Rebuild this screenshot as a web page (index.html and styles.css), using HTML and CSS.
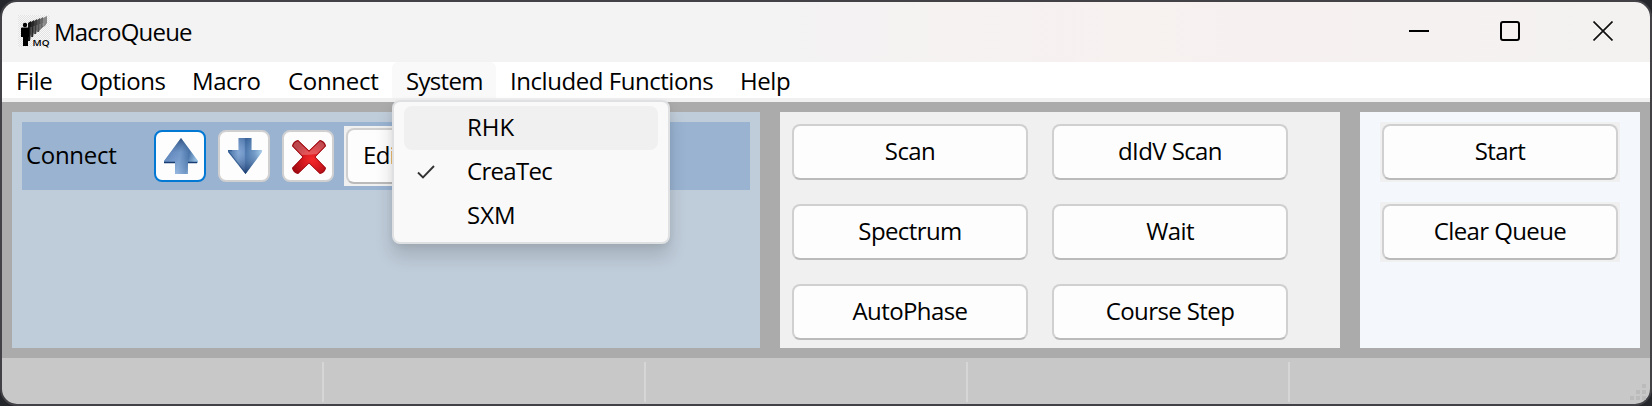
FILE: index.html
```html
<!DOCTYPE html>
<html lang="en">
<head>
<meta charset="utf-8">
<title>MacroQueue</title>
<link rel="stylesheet" href="styles.css">
</head>
<body>
<div class="window">
  <header class="titlebar">
    <svg class="app-icon" width="32" height="32" viewBox="0 0 32 32">
      <defs>
        <pattern id="checker" width="2" height="2" patternUnits="userSpaceOnUse">
          <rect width="2" height="2" fill="#f8f8f8"/><rect width="1" height="1" fill="#e2e2e2"/><rect x="1" y="1" width="1" height="1" fill="#e2e2e2"/>
        </pattern>
      </defs>
      <rect width="32" height="32" fill="url(#checker)"/>
      <path d="M25 3l4-2v7l-2 3-2 1z" fill="#888"/>
      <path d="M22 4l3-2v10l-3 3z" fill="#666"/>
      <path d="M19 5l3-2v11l-1 3h-2z" fill="#505050"/>
      <path d="M16 6l3-2v11l-1 4h-2z" fill="#3c3c3c"/>
      <path d="M13 7l3-2v12l-1 5h-2z" fill="#282828"/>
      <path d="M10 8l3-2v13l-1 7h-2z" fill="#161616"/>
      <g fill="#000"><circle cx="7" cy="10" r="2.200"/><path d="M4 12.500h6q1 0 1 1V22H10v9H5v-9H3v-8.500q0-1 1-1z"/></g>
      <path d="M13 12v11M16 11v9M19 10v7M22 9v5M25 8v3" stroke="#bbb" stroke-width=".5"/>
      <text class="icon-label" x="14.500" y="31" textLength="17" lengthAdjust="spacingAndGlyphs">MQ</text>
    </svg>
    <h1 class="title">MacroQueue</h1>
    <div class="controls">
      <svg width="20" height="20" viewBox="0 0 20 20"><path d="M0 10h20" stroke="#000" stroke-width="2"/></svg>
      <svg class="maximize" width="20" height="20" viewBox="0 0 20 20"><rect x="1" y="1" width="18" height="18" rx="2" fill="none" stroke="#000" stroke-width="2"/></svg>
      <svg width="20" height="20" viewBox="0 0 20 20"><path d="M.5.5l19 19M19.500.5l-19 19" stroke="#111" stroke-width="1.700"/></svg>
    </div>
  </header>

  <nav class="menubar">
    <div class="menu m-file">File</div>
    <div class="menu m-options">Options</div>
    <div class="menu m-macro">Macro</div>
    <div class="menu m-connect">Connect</div>
    <div class="menu m-system open">System
      <div class="dropdown">
        <div class="option hover"><span class="mark"></span><span class="caps">RHK</span></div>
        <div class="option"><span class="mark"><svg width="18" height="14" viewBox="0 0 18 14"><path d="M1 7.500l5 5L17 1" fill="none" stroke="#333" stroke-width="1.900"/></svg></span><span class="createc">CreaTec</span></div>
        <div class="option"><span class="mark"></span><span class="caps">SXM</span></div>
      </div>
    </div>
    <div class="menu m-functions">Included Functions</div>
    <div class="menu m-help">Help</div>
  </nav>

  <main class="workspace">
    <section class="queue">
      <div class="queue-row">
        <span class="queue-name">Connect</span>
        <button class="tool focused" aria-label="Move up">
          <svg width="34" height="36" viewBox="0 0 34 36">
            <defs><linearGradient id="up" x1="0" y1="0" x2="1" y2=".2"><stop offset="0" stop-color="#5d83b9"/><stop offset=".35" stop-color="#7c9fcf"/><stop offset=".55" stop-color="#88acd8"/><stop offset=".8" stop-color="#527cae"/><stop offset="1" stop-color="#a9d3ef"/></linearGradient>
            <linearGradient id="shade" x1="0" y1="0" x2="0" y2="1"><stop offset="0" stop-color="#173968" stop-opacity=".8"/><stop offset=".4" stop-color="#315d98" stop-opacity=".25"/><stop offset="1" stop-color="#a9c7ec" stop-opacity=".4"/></linearGradient></defs>
            <path d="M17 0L34 23v2H24v11H11V25H0v-2z" fill="url(#up)"/>
            <path d="M17 0L34 23v2H24v11H11V25H0v-2z" fill="url(#shade)"/>
            <path d="M0 24.500h11M24 24.500h9" stroke="#183d73" stroke-width="1.300"/>
          </svg>
        </button>
        <button class="tool" aria-label="Move down">
          <svg width="34" height="36" viewBox="0 0 34 36">
            <defs><linearGradient id="down" x1="0" y1="0" x2="1" y2="0"><stop offset="0" stop-color="#315d94"/><stop offset=".3" stop-color="#86a9d6"/><stop offset=".48" stop-color="#6f94c6"/><stop offset=".52" stop-color="#416da4"/><stop offset=".8" stop-color="#779fc8"/><stop offset="1" stop-color="#b6dcf2"/></linearGradient>
            <linearGradient id="tip" x1="0" y1="0" x2="0" y2="1"><stop offset="0" stop-color="#244d83" stop-opacity=".4"/><stop offset=".4" stop-color="#7fa6d4" stop-opacity=".2"/><stop offset="1" stop-color="#102f62" stop-opacity=".85"/></linearGradient></defs>
            <path d="M10.500 0h13v12H34v2L17.500 36 0 14v-2h10.500z" fill="url(#down)"/>
            <path d="M10.500 0h13v12H34v2L17.500 36 0 14v-2h10.500z" fill="url(#tip)"/>
            <path d="M0 12.700h4M1 14l16.500 21" fill="none" stroke="#1c4277" stroke-width="1" opacity=".6"/>
          </svg>
        </button>
        <button class="tool delete" aria-label="Delete">
          <svg width="34" height="34" viewBox="0 0 34 34">
            <defs><radialGradient id="red" cx=".6" cy=".58" r=".58"><stop offset="0" stop-color="#f52a2a"/><stop offset=".45" stop-color="#d91b20"/><stop offset="1" stop-color="#a50b12"/></radialGradient></defs>
            <path d="M6 0L17 10.500 28 0q5 1 6 6L23.500 17 34 28q-1 5-6 6L17 23.500 6 34q-5-1-6-6L10.500 17 0 6q1-5 6-6z" fill="url(#red)"/>
            <path d="M6 1l11 11L28 1q4 1 5 5l-8 8q-8 1-15 1L1 6q1-4 5-5z" fill="#fff" opacity=".25"/>
            <path d="M6 .5L17 11 28 .5q4.500 1 5.500 5.500L23 17l10.500 11q-1 4.500-5.500 5.500L17 23 6 33.500q-4.500-1-5.500-5.500L11 17 .5 6Q1.500 1.500 6 .5z" fill="none" stroke="#960d14" stroke-width=".8"/>
          </svg>
        </button>
        <div class="edit-cell"><button class="edit">Edit</button></div>
      </div>
    </section>

    <section class="functions">
      <button class="action">Scan</button>
      <button class="action">dIdV Scan</button>
      <button class="action">Spectrum</button>
      <button class="action">Wait</button>
      <button class="action">AutoPhase</button>
      <button class="action">Course Step</button>
    </section>

    <section class="run">
      <div class="cell"><button class="action">Start</button></div>
      <div class="cell"><button class="action">Clear Queue</button></div>
    </section>
  </main>

  <footer class="statusbar">
    <div class="field"></div>
    <div class="field"></div>
    <div class="field"></div>
    <div class="field"></div>
    <svg class="grip" width="16" height="16" viewBox="0 0 16 16" fill="#bbb"><path d="M12 0h4v4h-4zM6 6h4v4H6zM12 6h4v4h-4zM0 12h4v4H0zM6 12h4v4H6zM12 12h4v4h-4z"/></svg>
  </footer>
</div>
</body>
</html>
```
FILE: styles.css
```css
* { box-sizing: border-box; }

body {
  margin: 0;
  padding: 2px;
  width: 1652px;
  height: 406px;
  overflow: hidden;
  background: #25262c;
  font-family: "Open Sans", "Noto Sans", sans-serif;
  font-size: 24px;
  letter-spacing: -0.6px;
  color: #000;
}

.window {
  width: 1648px;
  height: 402px;
  border-radius: 15px;
  overflow: hidden;
  box-shadow: 0 0 0 2px #414146;
  display: flex;
  flex-direction: column;
}

.titlebar {
  height: 60px;
  flex: none;
  display: flex;
  align-items: center;
  padding: 0 37px 2px 16px;
  background: linear-gradient(90deg, #f3f3f3 0%, #f3f3f3 45%, #f7f1f0 68%, #f5f1f0 85%, #f3f2f1 100%);
}

.app-icon {
  flex: none;
  overflow: visible;
}

.icon-label {
  font: 600 9.5px "Open Sans", sans-serif;
  letter-spacing: 0;
}

.title {
  margin: 0 0 0 4px;
  font-size: 24px;
  font-weight: 400;
  line-height: 30px;
  padding-top: 2px;
  letter-spacing: -0.8px;
}

.controls {
  margin-left: auto;
  padding-bottom: 1px;
  display: flex;
  gap: 72px;
}

.controls svg { display: block; }

.controls .maximize { margin: 0 1px 0 -1px; }

.menubar {
  height: 40px;
  flex: none;
  display: flex;
  background: #fff;
  border-bottom: 4px solid #f0f0f0;
}

.menu {
  position: relative;
  height: 36px;
  line-height: 38px;
  padding-left: 14px;
  white-space: nowrap;
  letter-spacing: -0.45px;
}

.m-file { width: 64px; }
.m-options { width: 112px; }
.m-macro { width: 96px; }
.m-connect { width: 118px; letter-spacing: -0.3px; }
.m-system { width: 104px; letter-spacing: -0.7px; }
.m-functions { width: 230px; }

.open {
  background: #f9f9f9;
  border-radius: 6px 6px 0 0;
}

.dropdown {
  position: absolute;
  left: 0;
  top: 38px;
  z-index: 2;
  width: 278px;
  height: 144px;
  padding: 4px 10px;
  background: #f9f9f9;
  border: 2px solid #dfe0e2;
  border-radius: 8px;
  box-shadow: 0 12px 18px rgba(0, 0, 0, 0.14), 0 2px 6px rgba(0, 0, 0, 0.06);
}

.option {
  height: 44px;
  line-height: 42px;
  display: flex;
  align-items: center;
  border-radius: 8px;
}

.option > span:last-child { padding-bottom: 2px; }
.caps { letter-spacing: 0; }

.hover { background: #f0f0f0; }

.mark {
  width: 63px;
  padding-left: 13px;
  display: flex;
}

.workspace {
  height: 256px;
  flex: none;
  display: flex;
  gap: 20px;
  padding: 10px;
  background: #ababab;
}

.queue {
  width: 748px;
  padding: 10px;
  background: #bfccd9;
}

.queue-row {
  height: 68px;
  display: flex;
  align-items: center;
  gap: 12px;
  padding-left: 4px;
  background: #99b3d1;
}

.queue-name {
  width: 116px;
  padding-bottom: 3px;
  letter-spacing: -0.3px;
}

button {
  font: inherit;
  letter-spacing: inherit;
  color: inherit;
  margin: 0;
  padding: 0 0 3px;
  background: #fdfdfd;
  border: 2px solid #d0d0d0;
  border-bottom-color: #bababa;
  border-radius: 8px;
}

.tool {
  width: 52px;
  height: 52px;
  padding: 0 0 0 1px;
  display: grid;
  place-items: center;
  border-color: #d0d0d0;
}

.delete { padding: 2px 0 0 2px; }

.focused { border-color: #0078d4; }

.edit-cell {
  width: 204px;
  height: 60px;
  margin-left: -2px;
  padding: 2px;
  background: #f0f0f0;
}

.edit {
  width: 200px;
  height: 56px;
  padding-left: 15px;
  text-align: left;
}

.functions {
  width: 560px;
  display: grid;
  grid-template-columns: 236px 236px;
  grid-auto-rows: 56px;
  gap: 24px;
  padding: 12px;
  background: #f0f0f0;
}

.run {
  width: 280px;
  display: flex;
  flex-direction: column;
  gap: 20px;
  padding: 10px 20px;
  background: #f4f7fc;
}

.cell {
  height: 60px;
  padding: 2px;
  background: #f0f0f0;
}

.action {
  width: 236px;
  height: 56px;
}

.statusbar {
  flex: 1;
  position: relative;
  display: flex;
  padding: 4px 0 2px;
  background: #c8c8c8;
}

.field {
  width: 322px;
  border-right: 2px solid #d6d6d6;
}

.grip {
  position: absolute;
  right: 4px;
  bottom: 4px;
}
```
